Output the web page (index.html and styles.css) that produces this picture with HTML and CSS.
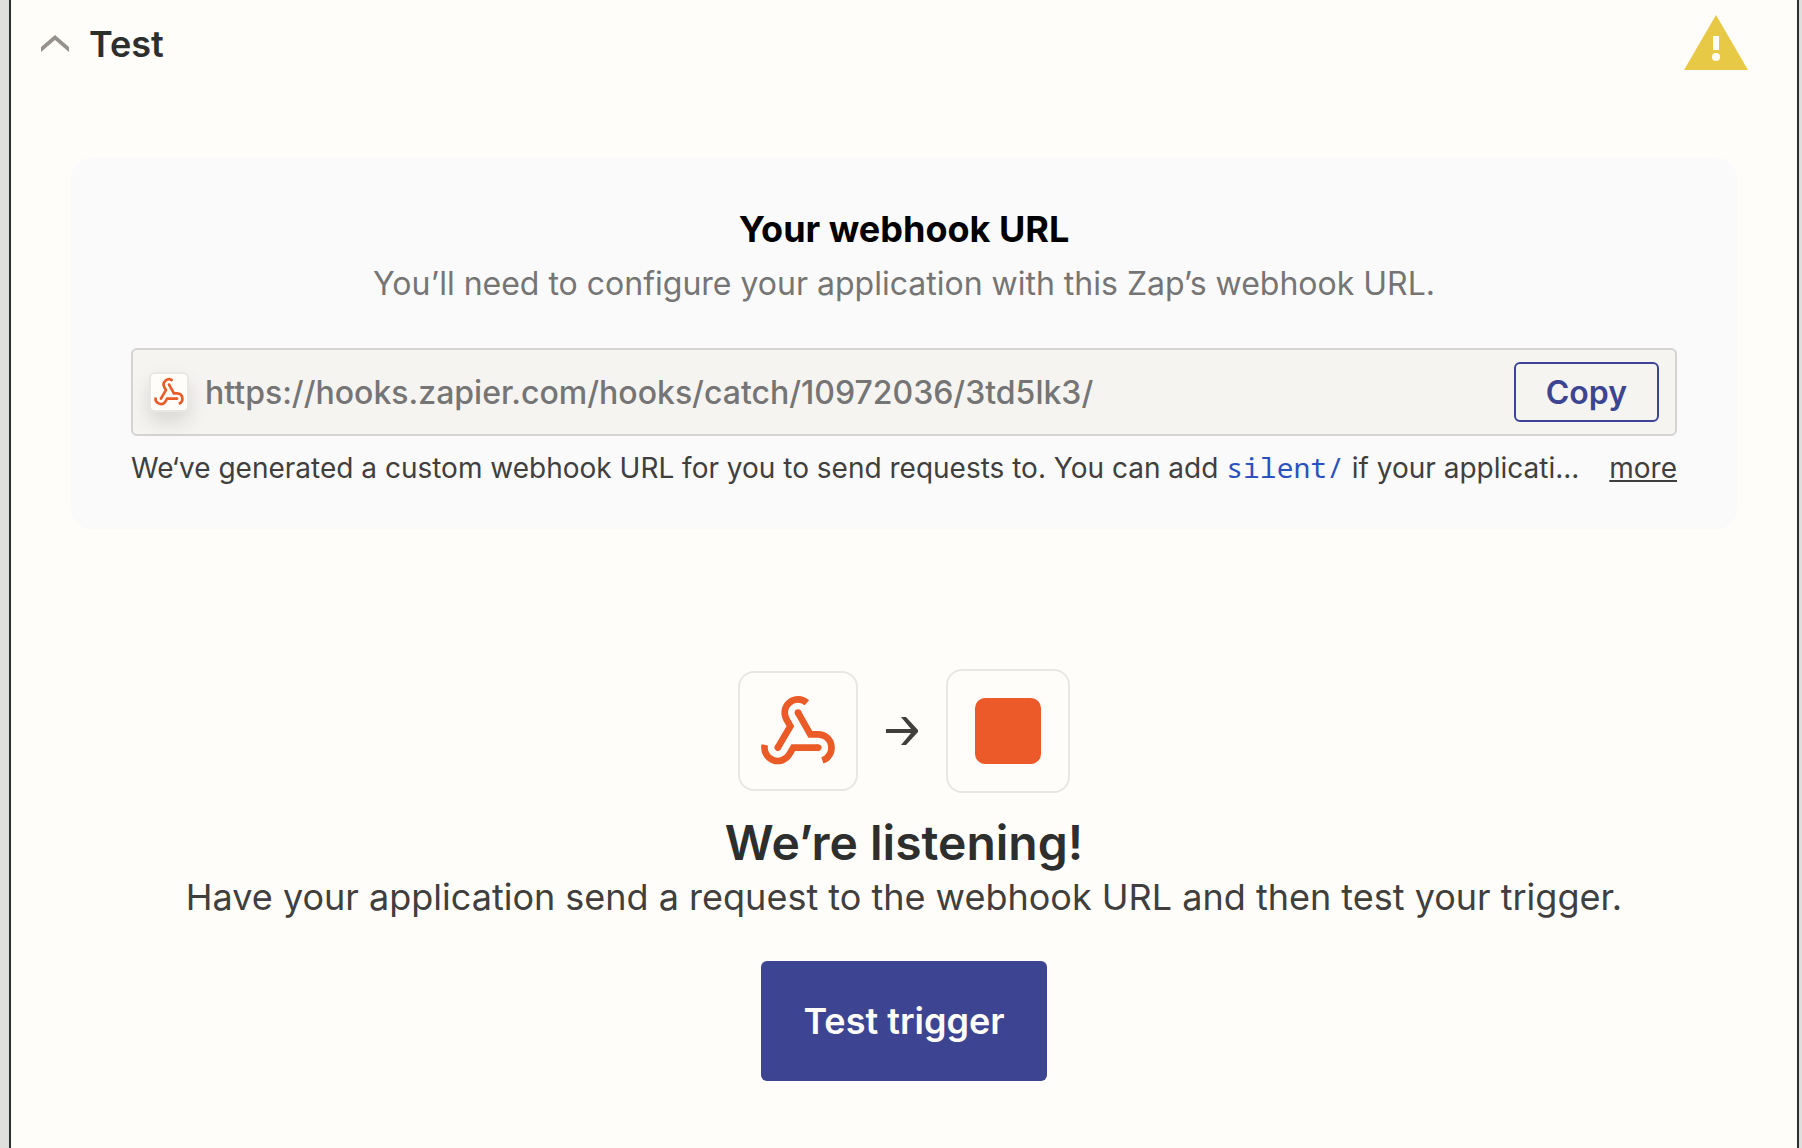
FILE: index.html
```html
<!DOCTYPE html>
<html lang="en">
<head>
  <meta charset="UTF-8" />
  <meta name="viewport" content="width=device-width, initial-scale=1" />
  <title>Test trigger</title>
  <link rel="stylesheet" href="styles.css">
</head>
<body>

  <!-- webhook logo, used twice -->
  <svg class="defs" aria-hidden="true">
    <symbol id="webhook" viewBox="114 123 240 240">
      <g id="arm">
        <path d="M234 188 L271 253 H295 A40 40 0 0 1 307 331" fill="none" stroke="#eb5b27" stroke-width="20" />
        <circle cx="234" cy="188" r="10" fill="#eb5b27" />
      </g>
      <use href="#arm" transform="rotate(120 234 258)" />
      <use href="#arm" transform="rotate(240 234 258)" />
    </symbol>
  </svg>

  <main class="panel">
    <header class="panel-header">
      <button class="toggle" type="button" aria-expanded="true">
        <svg width="28" height="18" viewBox="0 0 28 18" aria-hidden="true">
          <path d="M0 12 L14 0 L28 12 V17 L14 5 L0 17 Z" fill="#95928e" />
        </svg>
        Test
      </button>
      <svg class="warning" width="64" height="60" viewBox="0 0 64 60" role="img" aria-label="Warning">
        <path d="M32 1 L64 56 H0 Z" fill="#e8c946" />
        <path d="M29 22 H35 V36 H29 Z" fill="#fffdf9" />
        <circle cx="32" cy="43" r="4" fill="#fffdf9" />
      </svg>
    </header>

    <section class="card">
      <h2>Your webhook URL</h2>
      <p class="lead">You’ll need to configure your application with this Zap’s webhook URL.</p>
      <div class="url-box">
        <span class="url-icon"><svg width="32" height="32" aria-hidden="true"><use href="#webhook" /></svg></span>
        <input type="text" aria-label="Webhook URL" value="https://hooks.zapier.com/hooks/catch/10972036/3td5lk3/" readonly>
        <button class="copy" type="button">Copy</button>
      </div>
      <div class="help">
        <p>We‘ve generated a custom webhook URL for you to send requests to. You can add <code>silent/</code> if your applicati...</p>
        <a href="#">more</a>
      </div>
    </section>

    <section class="listening">
      <div class="flow">
        <span class="app app-source"><svg width="80" height="80" aria-hidden="true"><use href="#webhook" /></svg></span>
        <svg width="32" height="28" viewBox="0 0 32 28" aria-hidden="true">
          <path d="M0 12 H25 L15 0 H20 L32 13 V15 L20 28 H15 L25 16 H0 Z" fill="#403f3e" />
        </svg>
        <span class="app app-target"></span>
      </div>
      <h2>We’re listening!</h2>
      <p>Have your application send a request to the webhook URL and then test your trigger.</p>
      <button class="test" type="button">Test trigger</button>
    </section>
  </main>

</body>
</html>
```
FILE: styles.css
```css
* { box-sizing: border-box; }
body { margin: 0; padding: 0 3px 0 9px; background: #dfdfde; font-family: Inter, sans-serif; color: #2d2e2e; }
h2, p { margin: 0; }
button, input { font: inherit; }
button { cursor: pointer; }
.defs { position: absolute; width: 0; height: 0; }

.panel { min-height: 100vh; border: solid #2d2e2e; border-width: 0 2px; background: #fffdf9; padding-bottom: 64px; }
.panel-header { display: flex; align-items: center; justify-content: space-between; height: 88px; padding: 0 49px 0 30px; }
.toggle { display: flex; align-items: center; gap: 20px; padding: 0; border: 0; background: none; color: #2d2e2e; font-size: 36px; font-weight: 600; }

.card { margin: 70px 60px 0; padding: 44px 60px 39px; border-radius: 20px; background: #fafafa; text-align: center; }
.card h2 { font-size: 36px; font-weight: 700; line-height: 54px; color: #000; }
.lead { font-size: 32px; line-height: 56px; color: #757575; }
.url-box { display: flex; align-items: center; height: 88px; margin-top: 36px; padding: 0 16px; border: 2px solid #d4d3cf; border-radius: 6px; background: #f6f4f1; }
.url-icon { display: flex; align-items: center; justify-content: center; width: 40px; height: 40px; border: 2px solid #e8e7e3; border-radius: 6px; background: #fffdf9; box-shadow: 0 10px 20px rgba(0, 0, 0, 0.12); }
.url-box input { flex: 1; min-width: 0; padding: 0 16px; border: 0; outline: 0; background: none; color: #757575; font-size: 32px; font-weight: 500; }
.copy { height: 60px; padding: 0 30px; border: 2px solid #3d4592; border-radius: 6px; background: none; color: #3d4592; font-size: 32px; font-weight: 600; }
.help { display: flex; justify-content: space-between; margin-top: 10px; font-size: 28px; line-height: 44px; color: #403f3e; }
.help p { white-space: nowrap; }
.help code { font-family: "Noto Sans Mono", "DejaVu Sans Mono", "Liberation Mono", monospace; font-size: 28px; line-height: 1; color: #2b51c0; }
.help a { color: inherit; }

.listening { display: flex; flex-direction: column; align-items: center; margin-top: 140px; text-align: center; }
.flow { display: flex; align-items: center; gap: 28px; }
.app { display: flex; align-items: center; justify-content: center; border: 2px solid #e8e7e3; border-radius: 16px; }
.app-source { width: 120px; height: 120px; }
.app-target { width: 124px; height: 124px; }
.app-target::before { content: ""; width: 66px; height: 66px; border-radius: 10px; background: #ed5a29; }
.listening h2 { margin-top: 20px; font-size: 48px; font-weight: 600; line-height: 60px; }
.listening p { font-size: 36px; line-height: 48px; color: #403f3e; }
.test { height: 120px; margin-top: 40px; padding: 0 42px; border: 0; border-radius: 6px; background: #3d4592; color: #fffdf9; font-size: 36px; font-weight: 600; }
```
